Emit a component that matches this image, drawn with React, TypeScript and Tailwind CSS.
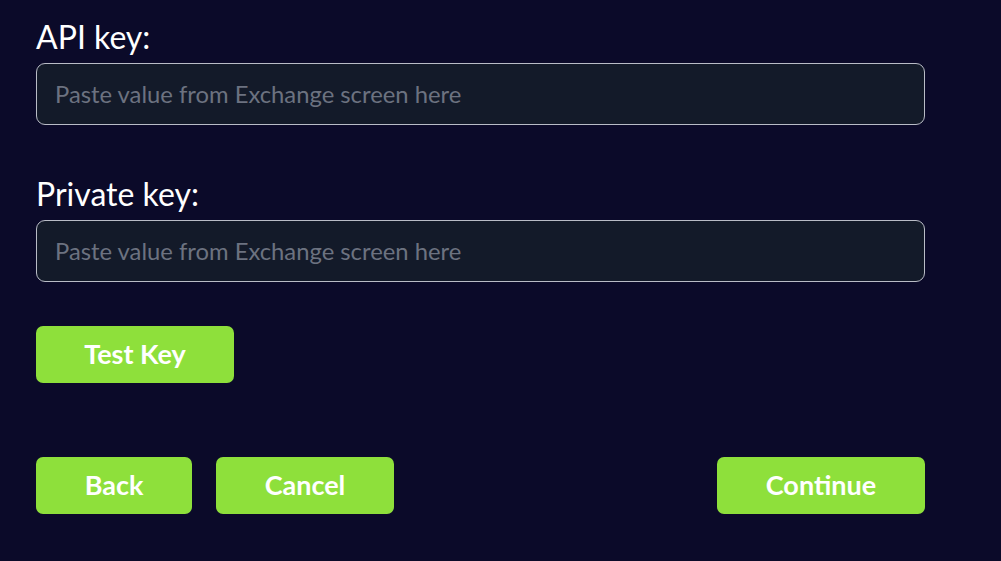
import React from 'react';

const green = 'bg-[#8ee03b] text-white font-bold text-[27px] rounded-[7px] h-[57px] flex items-center justify-center';

function Field({ label }: { label: string }) {
    return (
        <div className="flex flex-col">
            <label className="text-[32px] leading-[36px] text-white">{label}</label>
            <input
                type="text"
                placeholder="Paste value from Exchange screen here"
                className="mt-[8px] h-[62px] w-[889px] rounded-[9px] border border-[#b9bcc6] bg-[#131a29] px-[18px] text-[23.8px] text-white placeholder:text-[#6c7280] focus:outline-none"
            />
        </div>
    );
}

export default function App() {
    return (
        <div className="min-h-screen w-full bg-[#0b0a29] font-['Lato',sans-serif]">
            <div className="flex flex-col pl-[36px] pt-[19px]">
                <Field label="API key:" />
                <div className="h-[51px]" />
                <Field label="Private key:" />
                <div className="mt-[44px]">
                    <button className={`${green} w-[198px]`}>Test Key</button>
                </div>
                <div className="mt-[74px] flex w-[889px] items-center">
                    <button className={`${green} w-[156px]`}>Back</button>
                    <button className={`${green} ml-[24px] w-[178px]`}>Cancel</button>
                    <button className={`${green} ml-auto w-[208px]`}>Continue</button>
                </div>
            </div>
        </div>
    );
}
